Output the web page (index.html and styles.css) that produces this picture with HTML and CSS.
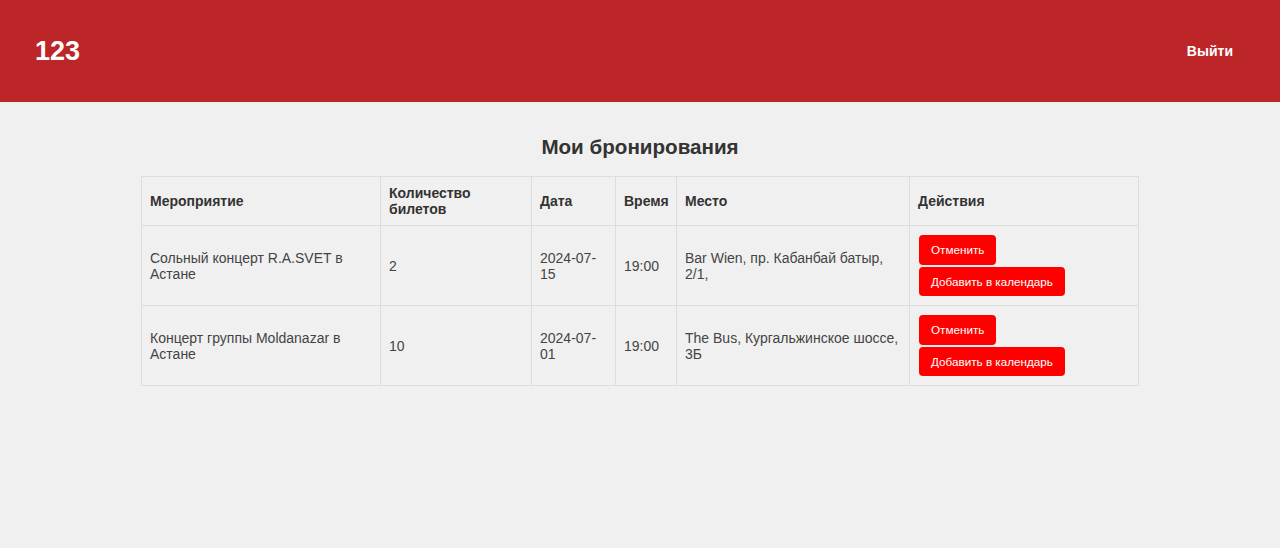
FILE: index.html
```html
<!DOCTYPE html>
<html lang="ru">
<head>
<meta charset="utf-8">
<title>Мои бронирования</title>
<link rel="stylesheet" href="styles.css">
</head>
<body>
<header class="topbar">
  <div class="logo">123</div>
  <nav class="nav"><a class="nav-link" href="#">Выйти</a></nav>
</header>
<main class="content">
  <h2 class="page-title">Мои бронирования</h2>
  <table class="bookings">
    <colgroup>
      <col class="c-event">
      <col class="c-qty">
      <col class="c-date">
      <col class="c-time">
      <col class="c-place">
      <col class="c-actions">
    </colgroup>
    <thead>
      <tr>
        <th>Мероприятие</th>
        <th>Количество билетов</th>
        <th>Дата</th>
        <th>Время</th>
        <th>Место</th>
        <th>Действия</th>
      </tr>
    </thead>
    <tbody>
      <tr>
        <td>Сольный концерт R.A.SVET в Астане</td>
        <td>2</td>
        <td>2024-07-15</td>
        <td>19:00</td>
        <td>Bar Wien, пр. Кабанбай батыр, 2/1,</td>
        <td>
          <div class="actions">
            <button class="btn">Отменить</button>
            <button class="btn">Добавить в календарь</button>
          </div>
        </td>
      </tr>
      <tr>
        <td>Концерт группы Moldanazar в Астане</td>
        <td>10</td>
        <td>2024-07-01</td>
        <td>19:00</td>
        <td>The Bus, Кургальжинское шоссе, 3Б</td>
        <td>
          <div class="actions">
            <button class="btn">Отменить</button>
            <button class="btn">Добавить в календарь</button>
          </div>
        </td>
      </tr>
    </tbody>
  </table>
</main>
</body>
</html>
```
FILE: styles.css
```css
* { box-sizing: border-box; }
html, body {
  margin: 0;
  padding: 0;
  background: #f0f0f0;
  font-family: "Liberation Sans", Arial, sans-serif;
  color: #333;
}
.topbar {
  height: 102px;
  background: #bd2628;
  display: flex;
  align-items: center;
  justify-content: space-between;
  padding: 0 35px 0 35px;
}
.logo {
  color: #fff;
  font-weight: bold;
  font-size: 27px;
  line-height: 1;
}
.nav-link {
  color: #fff;
  font-weight: bold;
  font-size: 14px;
  text-decoration: none;
  padding: 10px 12px;
}
.content {
  padding-top: 33px;
}
.page-title {
  margin: 0 0 17px;
  text-align: center;
  font-size: 20.6px;
  line-height: 24px;
  font-weight: bold;
  color: #333;
}
.bookings {
  width: 997px;
  margin: 0 auto;
  border-collapse: collapse;
  table-layout: fixed;
  font-size: 14px;
  line-height: 16px;
}
.c-event { width: 239px; }
.c-qty { width: 151px; }
.c-date { width: 84px; }
.c-time { width: 61px; }
.c-place { width: 233px; }
.c-actions { width: 229px; }
.bookings th,
.bookings td {
  border: 1px solid #dddddd;
  padding: 8px;
  text-align: left;
  vertical-align: middle;
}
.bookings th {
  font-weight: bold;
  color: #333;
}
.bookings td {
  color: #444;
}
.actions {
  display: flex;
  flex-direction: column;
  align-items: flex-start;
  padding-left: 1px;
}
.btn {
  background: #ff0000;
  color: #fff;
  border: none;
  border-radius: 4px;
  font-family: "Liberation Sans", Arial, sans-serif;
  font-size: 11.7px;
  line-height: 13.5px;
  padding: 8px 12px;
  margin: 1px 0;
  cursor: pointer;
}
```
